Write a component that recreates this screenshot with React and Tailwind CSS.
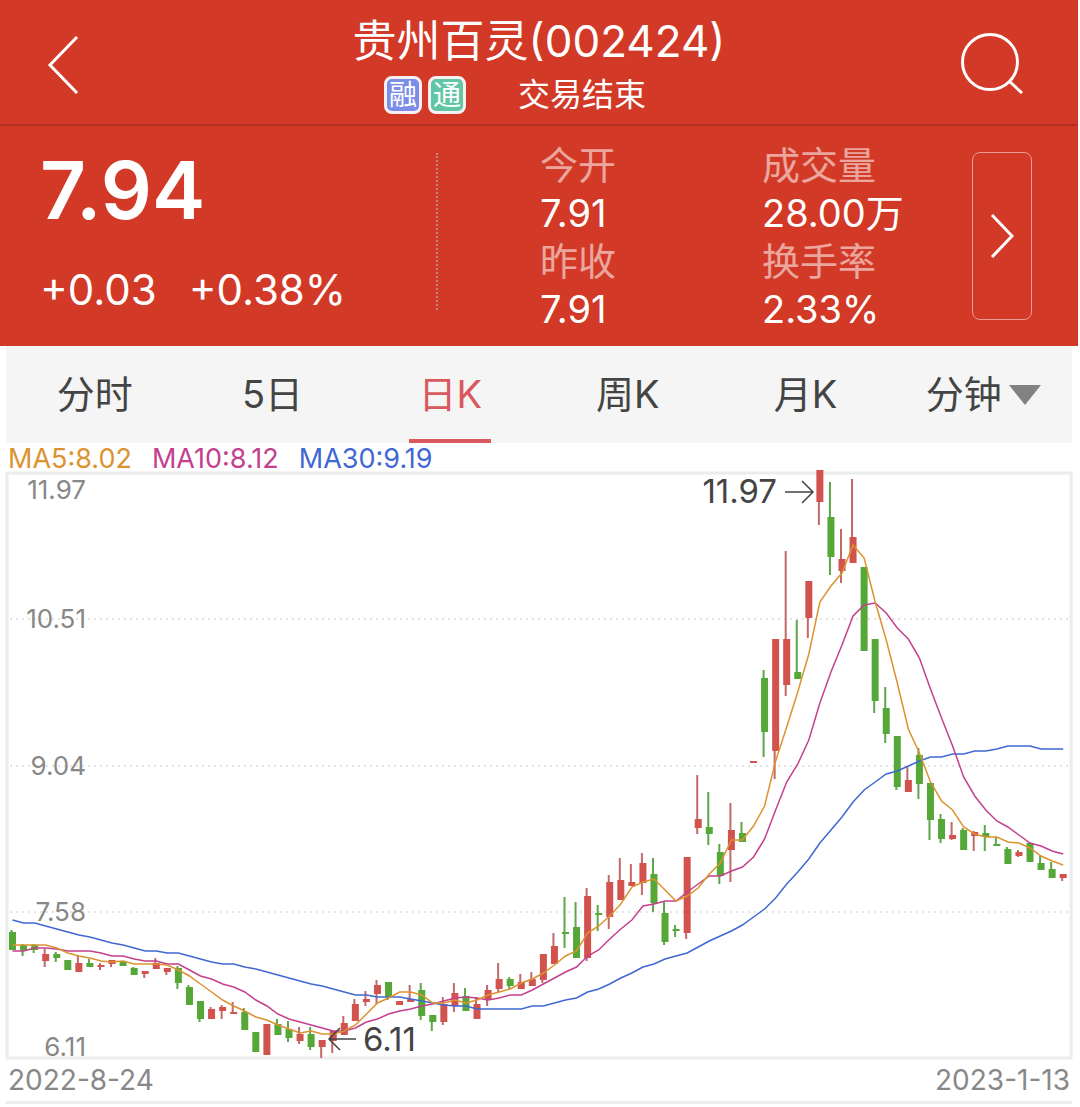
import { useState } from 'react';

const UP = { body: '#d2524e', wick: '#c4696a' };
const DOWN = { body: '#55a838', wick: '#5ea64a' };

// [up, high, open/close top, open/close bottom, low]
const CANDLES = [
  [0, 930, 932, 950, 950], [0, 944, 945, 950, 956], [0, 944, 945, 950, 953], [1, 949, 954, 961, 967],
  [0, 952, 954, 958, 962], [0, 960, 960, 970, 970], [1, 955, 963, 972, 972], [0, 959, 963, 967, 967],
  [1, 963, 965, 967, 970], [1, 960, 960, 964, 967], [0, 962, 962, 966, 966], [0, 967, 968, 975, 975],
  [1, 971, 971, 974, 978], [1, 958, 963, 969, 969], [1, 968, 968, 972, 975], [0, 966, 968, 983, 989],
  [0, 985, 987, 1005, 1005], [0, 1001, 1001, 1019, 1022], [1, 1007, 1009, 1019, 1019], [1, 1005, 1007, 1011, 1019],
  [1, 1002, 1012, 1014, 1014], [0, 1008, 1012, 1030, 1030], [0, 1032, 1032, 1052, 1052], [1, 1024, 1024, 1055, 1055],
  [0, 1019, 1024, 1035, 1035], [0, 1021, 1029, 1038, 1042], [1, 1027, 1034, 1041, 1044], [0, 1027, 1034, 1047, 1050],
  [1, 1040, 1040, 1047, 1058], [1, 1031, 1031, 1041, 1053], [1, 1016, 1023, 1035, 1035], [1, 999, 1004, 1021, 1021],
  [1, 991, 999, 1002, 1006], [1, 980, 985, 994, 1004], [0, 982, 982, 997, 1000], [1, 1001, 1001, 1005, 1005],
  [1, 985, 999, 1002, 1002], [0, 983, 990, 1016, 1020], [0, 1015, 1015, 1022, 1031], [1, 997, 1004, 1022, 1025],
  [1, 983, 993, 1006, 1012], [0, 988, 996, 1011, 1011], [1, 997, 1004, 1019, 1019], [1, 985, 990, 1000, 1006],
  [1, 963, 979, 989, 992], [0, 977, 979, 986, 989], [1, 974, 982, 989, 989], [1, 972, 979, 986, 986],
  [1, 954, 954, 980, 983], [1, 933, 946, 964, 964], [0, 897, 932, 934, 948], [0, 902, 927, 958, 958],
  [1, 888, 896, 958, 961], [0, 905, 913, 915, 931], [1, 875, 882, 917, 929], [1, 858, 880, 900, 900],
  [1, 864, 882, 886, 886], [1, 853, 863, 883, 895], [0, 858, 874, 903, 912], [0, 901, 913, 942, 945],
  [0, 925, 929, 931, 937], [1, 857, 857, 933, 939], [1, 775, 819, 828, 834], [0, 792, 827, 834, 845],
  [0, 844, 852, 876, 884], [1, 803, 830, 850, 882], [0, 822, 833, 842, 842], [1, 761, 761, 763, 763],
  [0, 670, 678, 732, 757], [1, 639, 639, 751, 779], [1, 551, 639, 685, 696], [0, 620, 672, 679, 679],
  [1, 581, 581, 618, 638], [1, 470, 470, 502, 525], [0, 482, 517, 557, 575], [1, 529, 559, 571, 583],
  [1, 479, 537, 563, 563], [0, 567, 567, 651, 651], [0, 639, 639, 701, 713], [0, 687, 708, 734, 743],
  [0, 736, 736, 787, 790], [1, 767, 780, 792, 792], [0, 748, 755, 784, 799], [0, 783, 783, 820, 840],
  [0, 814, 819, 839, 843], [1, 822, 835, 839, 840], [0, 828, 830, 850, 850], [1, 831, 832, 836, 851],
  [0, 825, 833, 837, 851], [0, 837, 844, 846, 846], [0, 847, 849, 864, 864], [1, 850, 852, 856, 857],
  [0, 843, 843, 862, 862], [0, 856, 863, 870, 870], [0, 862, 869, 878, 878], [1, 874, 874, 878, 881],
];

const MA5 = [
  945, 945, 945, 945, 948, 953, 956, 958, 961, 962, 961, 964, 964, 964, 965, 970, 976, 984, 992, 1000,
  1006, 1011, 1017, 1020, 1025, 1029, 1033, 1031, 1034, 1034, 1031, 1025, 1014, 1003, 998, 992, 992, 995, 1003, 1003,
  1000, 1003, 1000, 995, 992, 989, 983, 979, 973, 965, 956, 951, 933, 926, 916, 904, 887, 882, 879, 890,
  901, 896, 888, 874, 863, 840, 840, 826, 806, 761, 727, 692, 654, 602, 586, 573, 545, 558, 602, 640,
  683, 729, 753, 782, 801, 810, 827, 834, 837, 837, 842, 843, 848, 856, 861, 865,
];

const MA10 = [
  951, 951, 948, 948, 949, 951, 951, 951, 953, 956, 956, 959, 961, 961, 964, 964, 970, 976, 979, 984,
  987, 992, 1000, 1006, 1014, 1019, 1022, 1025, 1028, 1031, 1031, 1028, 1022, 1019, 1014, 1011, 1009, 1006, 1004, 1001,
  998, 997, 998, 1000, 998, 995, 995, 990, 984, 978, 972, 967, 956, 950, 939, 929, 920, 906, 904, 901,
  901, 892, 884, 876, 876, 871, 867, 857, 839, 810, 782, 764, 740, 703, 672, 645, 616, 605, 603, 613,
  628, 639, 658, 689, 718, 746, 777, 796, 810, 821, 827, 835, 843, 846, 851, 854,
];

const MA30 = [
  920, 923, 923, 926, 929, 932, 935, 937, 940, 943, 945, 948, 951, 951, 953, 953, 956, 959, 962, 964,
  964, 967, 969, 972, 975, 978, 981, 984, 986, 989, 992, 995, 995, 997, 997, 997, 999, 1001, 1003, 1005,
  1006, 1006, 1009, 1009, 1009, 1009, 1009, 1006, 1006, 1003, 1000, 998, 992, 989, 984, 978, 973, 967, 964, 959,
  956, 953, 947, 941, 936, 931, 925, 917, 909, 898, 884, 872, 859, 843, 830, 817, 802, 790, 782, 774,
  771, 766, 761, 757, 757, 754, 754, 751, 751, 749, 746, 746, 746, 749, 749, 749,
];

const AVERAGES = [
  { values: MA30, color: '#3f68d2' },
  { values: MA10, color: '#c4408e' },
  { values: MA5, color: '#dc932f' },
];

const AXIS = [
  { label: '11.97', y: 499 },
  { label: '10.51', y: 628, line: 619 },
  { label: '9.04', y: 775, line: 766 },
  { label: '7.58', y: 921, line: 912 },
  { label: '6.11', y: 1056 },
];

const TABS = ['分时', '5日', '日K', '周K', '月K'];

const xAt = (i) => 12.5 + i * 11.06;
const toPoints = (values) => values.map((y, i) => `${xAt(i)},${y}`).join(' ');

function Tag({ text, className }) {
  return (
    <span
      className={`flex size-[38px] items-center justify-center rounded-lg border-[3px] border-[#f8f0f0] text-[28px] leading-none ${className}`}
    >
      {text}
    </span>
  );
}

function Header() {
  return (
    <header className="flex h-[126px] items-center justify-between border-b-2 border-[#b23122] px-10">
      <button type="button" aria-label="返回" className="w-20">
        <svg viewBox="0 0 80 64" className="h-16 w-20" fill="none" stroke="currentColor" strokeWidth="3">
          <path d="M37 7 L10 35 L37 63" />
        </svg>
      </button>
      <div className="flex flex-col items-center gap-1 pt-0.5">
        <h1 className="text-[44px] leading-[60px]">贵州百灵(002424)</h1>
        <div className="flex items-center gap-1.5 pr-12">
          <Tag text="融" className="bg-[#7b8de8]" />
          <Tag text="通" className="bg-[#61c6a5]" />
          <span className="ml-[46px] text-[32px] leading-10">交易结束</span>
        </div>
      </div>
      <button type="button" aria-label="搜索" className="w-20">
        <svg viewBox="0 0 80 64" className="h-16 w-20" fill="none" stroke="currentColor" strokeWidth="3">
          <circle cx="32" cy="32" r="27.5" />
          <path d="M51 51 L64 63" />
        </svg>
      </button>
    </header>
  );
}

function Stat({ label, value }) {
  return (
    <div>
      <dt className="text-white/55">{label}</dt>
      <dd>{value}</dd>
    </div>
  );
}

function Quote() {
  return (
    <section className="flex h-[220px] pr-[46px] pl-10">
      <div className="flex w-[396px] flex-col">
        <p className="mt-[18px] text-[80px] leading-[92px] font-semibold">7.94</p>
        <p className="mt-[26px] flex gap-8 text-[42px] leading-[56px]">
          <span>+0.03</span>
          <span>+0.38%</span>
        </p>
      </div>
      <div className="mt-[27px] mb-9 border-l-2 border-dotted border-[#b58c86]" />
      <dl className="flex flex-1 pt-[15px] pl-[102px] text-[38px] leading-[48px]">
        <div className="w-[222px]">
          <Stat label="今开" value="7.91" />
          <Stat label="昨收" value="7.91" />
        </div>
        <div>
          <Stat label="成交量" value="28.00万" />
          <Stat label="换手率" value="2.33%" />
        </div>
      </dl>
      <button
        type="button"
        aria-label="更多"
        className="mt-[26px] flex h-[168px] w-[60px] items-center justify-center rounded-lg border border-white/50"
      >
        <svg viewBox="0 0 24 46" className="h-[46px] w-6" fill="none" stroke="currentColor" strokeWidth="3">
          <path d="M2 2 L22 23 L2 44" />
        </svg>
      </button>
    </section>
  );
}

function PeriodTabs() {
  const [active, setActive] = useState('日K');

  return (
    <nav className="mr-2 ml-1.5 grid h-[97px] grid-cols-6 bg-[#f5f5f5] text-[38px] text-[#444]">
      {TABS.map((tab) => (
        <button
          key={tab}
          type="button"
          onClick={() => setActive(tab)}
          className={`relative ${tab === active ? 'text-[#d9595f]' : ''}`}
        >
          {tab}
          {tab === active && <span className="absolute inset-x-12 bottom-0 h-1 bg-[#d9595f]" />}
        </button>
      ))}
      <label className="flex items-center justify-center gap-1.5">
        <select aria-label="分钟" className="appearance-none bg-transparent">
          <option>分钟</option>
        </select>
        <svg viewBox="0 0 32 20" className="h-5 w-8" fill="#828282">
          <path d="M0 0 H32 L16 20 Z" />
        </svg>
      </label>
    </nav>
  );
}

function Candle({ x, candle }) {
  const [up, high, top, bottom, low] = candle;
  const color = up ? UP : DOWN;

  return (
    <g>
      <rect x={x - 2} y={high} width="2" height={low - high} fill={color.wick} />
      <rect x={x - 3.5} y={top} width="7" height={bottom - top} fill={color.body} />
    </g>
  );
}

function Chart() {
  return (
    <svg viewBox="0 469 1080 594" className="block w-full" fill="none">
      <rect x="7" y="473" width="1064" height="585" stroke="#ececec" strokeWidth="3" />
      {AXIS.filter((a) => a.line).map((a) => (
        <line
          key={a.label}
          x1="10"
          x2="1070"
          y1={a.line}
          y2={a.line}
          stroke="#e4e4e4"
          strokeWidth="2"
          strokeDasharray="2 4"
        />
      ))}
      {AXIS.map((a) => (
        <text key={a.label} x="86" y={a.y} textAnchor="end" fontSize="26" fill="#888">
          {a.label}
        </text>
      ))}

      {CANDLES.map((candle, i) => (
        <Candle key={i} x={xAt(i)} candle={candle} />
      ))}

      {AVERAGES.map(({ values, color }) => (
        <polyline key={color} points={toPoints(values)} stroke={color} strokeWidth="1.5" />
      ))}

      <g stroke="#444" strokeWidth="1.5">
        <path d="M785 492 H813 M802 481 L813 492 L802 503" />
        <path d="M356 1039 H329 M340 1028 L329 1039 L340 1050" />
      </g>
      <g fill="#444" fontSize="33">
        <text x="777" y="503" textAnchor="end">11.97</text>
        <text x="363" y="1051">6.11</text>
      </g>
    </svg>
  );
}

export default function App() {
  return (
    <main className="bg-white font-['Inter','Noto_Sans_CJK_SC',sans-serif]">
      <div className="mr-0.5 bg-[#d23927] text-white">
        <Header />
        <Quote />
      </div>
      <PeriodTabs />
      <div className="flex h-[26px] gap-5 pt-1 pl-2 text-[27px] leading-6">
        <span className="text-[#dc932f]">MA5:8.02</span>
        <span className="text-[#c4408e]">MA10:8.12</span>
        <span className="text-[#3f68d2]">MA30:9.19</span>
      </div>
      <Chart />
      <div className="mr-2 ml-1.5 flex h-[41px] items-center justify-between border-b-[3px] border-[#ececec] px-0.5 pb-1 text-[28px] text-[#888]">
        <span>2022-8-24</span>
        <span>2023-1-13</span>
      </div>
    </main>
  );
}
